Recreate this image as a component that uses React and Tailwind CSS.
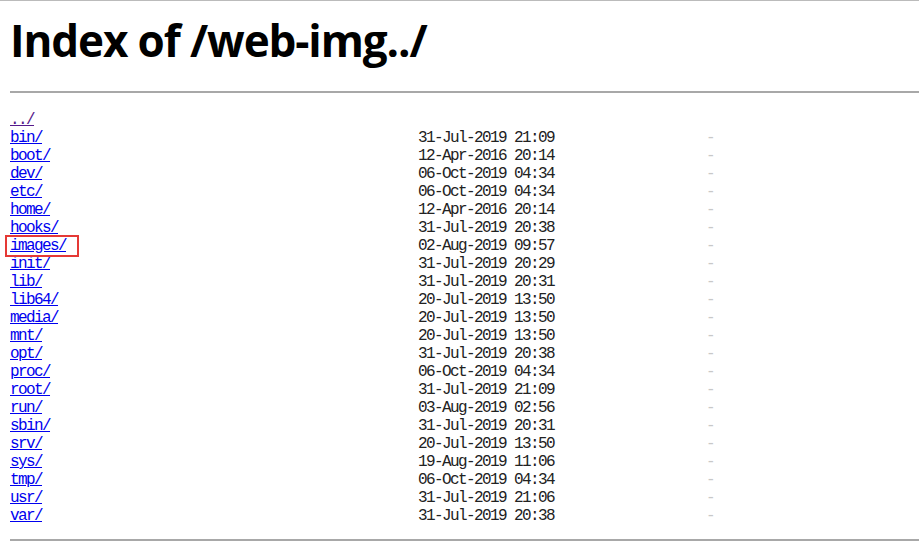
const rows = [
  ["bin/", "31-Jul-2019 21:09"],
  ["boot/", "12-Apr-2016 20:14"],
  ["dev/", "06-Oct-2019 04:34"],
  ["etc/", "06-Oct-2019 04:34"],
  ["home/", "12-Apr-2016 20:14"],
  ["hooks/", "31-Jul-2019 20:38"],
  ["images/", "02-Aug-2019 09:57"],
  ["init/", "31-Jul-2019 20:29"],
  ["lib/", "31-Jul-2019 20:31"],
  ["lib64/", "20-Jul-2019 13:50"],
  ["media/", "20-Jul-2019 13:50"],
  ["mnt/", "20-Jul-2019 13:50"],
  ["opt/", "31-Jul-2019 20:38"],
  ["proc/", "06-Oct-2019 04:34"],
  ["root/", "31-Jul-2019 21:09"],
  ["run/", "03-Aug-2019 02:56"],
  ["sbin/", "31-Jul-2019 20:31"],
  ["srv/", "20-Jul-2019 13:50"],
  ["sys/", "19-Aug-2019 11:06"],
  ["tmp/", "06-Oct-2019 04:34"],
  ["usr/", "31-Jul-2019 21:06"],
  ["var/", "31-Jul-2019 20:38"],
];

function Row({ name, date }) {
  return (
    <div className="flex h-[18px] items-center whitespace-nowrap">
      <span className="w-[408px] shrink-0">
        <a href="#" className="text-[#0000ee] underline">
          {name}
        </a>
      </span>
      <span className="w-[136px] shrink-0 text-[#222]">{date}</span>
      <span className="w-[160px] shrink-0 text-right text-[#c8c8c8]">-</span>
    </div>
  );
}

export default function App() {
  return (
    <div className="relative h-[545px] w-[919px] overflow-hidden border-t border-[#bbb] bg-white pl-[10px]">
      <h1 className="mt-[13px] h-[52px] font-['Open_Sans',sans-serif] text-[44px] font-bold leading-[52px] tracking-[-0.025em] text-black">
        Index of /web-img../
      </h1>
      <div className="mt-[25px] border-t-2 border-[#a8a8a8]" />
      <div className="pt-[18px] font-['Liberation_Mono',monospace] text-[16px] leading-[18px] tracking-[-1.6px]">
        <div className="flex h-[18px] items-center">
          <a href="#" className="text-[#551a8b] underline">
            ../
          </a>
        </div>
        {rows.map(([name, date]) => (
          <Row key={name} name={name} date={date} />
        ))}
      </div>
      <div className="mt-[14px] border-t-2 border-[#a8a8a8]" />
      <div className="absolute left-[5px] top-[234px] h-[22px] w-[74px] border-2 border-[#e53935]" />
    </div>
  );
}
